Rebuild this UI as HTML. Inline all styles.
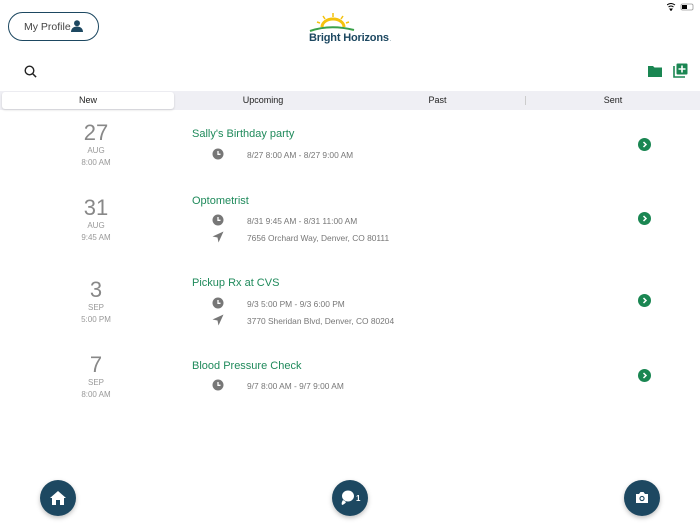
<!DOCTYPE html>
<html><head><meta charset="utf-8"><style>
*{margin:0;padding:0;box-sizing:border-box}
body{width:700px;height:525px;background:#fff;font-family:"Liberation Sans",sans-serif;position:relative;overflow:hidden;color:#777}
.a{position:absolute}
.prof{left:8px;top:12px;width:91px;height:29px;border:1px solid #1d4861;border-radius:15px;font-size:10.5px;color:#444;padding:8px 0 0 15px}
.tabs{left:0;top:91px;width:700px;height:19px;background:#efeff4}
.tab{position:absolute;top:0;height:19px;font-size:9px;color:#222;text-align:center;line-height:19px}
.day{width:70px;left:61px;text-align:center;color:#999}
.num{font-size:22px;color:#888;line-height:25px}
.sm{font-size:8px;line-height:12px}
.title{left:192px;font-size:11px;color:#1f8a5b}
.det{left:247px;font-size:8.4px;color:#777}
.ic{left:212px;width:12px;height:12px}
.chev{left:638px;width:13px;height:13px;border-radius:50%;background:#1a8652}
.fab{width:36px;height:36px;border-radius:50%;background:#1d4861;box-shadow:0 2px 5px rgba(0,0,0,.25)}
</style></head><body>
<div class="a prof">My Profile<svg style="position:absolute;left:62px;top:7px" width="12" height="12" viewBox="0 0 13 13"><circle cx="6.5" cy="3.5" r="3.2" fill="#1d4861"/><path d="M0 13c0-4 3-6 6.5-6s6.5 2 6.5 6z" fill="#1d4861"/></svg></div>
<svg class="a" style="left:308px;top:10px" width="90" height="34" viewBox="0 0 90 34">
<path d="M14 17a11 8 0 0 1 22 0" stroke="#f4c20d" stroke-width="3" fill="none"/>
<path d="M25 3v4M15 6l2 3M35 6l-2 3M9 12l3 1M41 12l-3 1" stroke="#f4c20d" stroke-width="1.5"/>
<path d="M2 21q20-7 44-1" stroke="#3aa14a" stroke-width="2" fill="none"/>
<text x="1" y="31" font-family="Liberation Sans" font-weight="bold" font-size="11" fill="#1d4861" textLength="80">Bright Horizons</text><text x="82" y="31" font-size="5" fill="#1d4861">.</text></svg>
<svg class="a" style="left:667px;top:3px" width="30" height="8" viewBox="0 0 30 8"><path d="M0 2q4-3 8 0M1.5 4q2.5-2 5 0M3 6l1 1.5 1-1.5z" stroke="#000" fill="none" stroke-width="1"/><rect x="14" y="1" width="12" height="6" rx="1.5" fill="none" stroke="#999" stroke-width=".8"/><rect x="15" y="2" width="5" height="4" fill="#000"/></svg>
<svg class="a" style="left:24px;top:65px" width="13" height="13" viewBox="0 0 13 13"><circle cx="5.5" cy="5.5" r="4.3" stroke="#222" stroke-width="1.4" fill="none"/><path d="M8.6 8.6l3.5 3.5" stroke="#222" stroke-width="1.5"/></svg>
<svg class="a" style="left:648px;top:65px" width="14" height="12" viewBox="0 0 14 12"><path d="M0 1h5l1.5 1.5H14V12H0z" fill="#1a8652"/></svg>
<svg class="a" style="left:673px;top:63px" width="15" height="15" viewBox="0 0 15 15"><path d="M1 3v11h11" stroke="#1a8652" stroke-width="1.6" fill="none"/><rect x="3.5" y="0.5" width="11" height="11" rx="1" fill="#1a8652"/><path d="M9 2.5v7M5.5 6h7" stroke="#fff" stroke-width="1.6"/></svg>
<div class="a tabs">
<div class="tab" style="left:2px;width:172px;top:1px;height:17px;line-height:17px;background:#fff;border-radius:3px;box-shadow:0 1px 2px rgba(0,0,0,.15)">New</div>
<div class="tab" style="left:176px;width:174px">Upcoming</div>
<div class="tab" style="left:350px;width:175px">Past</div>
<div style="position:absolute;left:525px;top:5px;width:1px;height:9px;background:#ccc"></div>
<div class="tab" style="left:526px;width:174px">Sent</div>
</div>

<div class="a day" style="top:120px"><div class="num">27</div><div class="sm">AUG</div><div class="sm">8:00 AM</div></div>
<div class="a title" style="top:128px">Sally's Birthday party</div>
<svg class="a ic" style="top:148px" viewBox="0 0 12 12"><circle cx="6" cy="6" r="5.5" fill="#777"/><path d="M6 3v3.3h2.5" stroke="#fff" stroke-width="1.3" fill="none"/></svg>
<div class="a det" style="top:150px">8/27 8:00 AM - 8/27 9:00 AM</div>
<div class="a chev" style="top:138px"><svg width="13" height="13" viewBox="0 0 13 13"><path d="M5.5 4l2.5 2.5L5.5 9" stroke="#fff" stroke-width="1.5" fill="none"/></svg></div>

<div class="a day" style="top:195px"><div class="num">31</div><div class="sm">AUG</div><div class="sm">9:45 AM</div></div>
<div class="a title" style="top:195px">Optometrist</div>
<svg class="a ic" style="top:214px" viewBox="0 0 12 12"><circle cx="6" cy="6" r="5.5" fill="#777"/><path d="M6 3v3.3h2.5" stroke="#fff" stroke-width="1.3" fill="none"/></svg>
<div class="a det" style="top:216px">8/31 9:45 AM - 8/31 11:00 AM</div>
<svg class="a ic" style="top:231px" viewBox="0 0 12 12"><path d="M11.5 0.5L0.5 5.5l5 1 1 5z" fill="#777"/></svg>
<div class="a det" style="top:233px">7656 Orchard Way, Denver, CO 80111</div>
<div class="a chev" style="top:212px"><svg width="13" height="13" viewBox="0 0 13 13"><path d="M5.5 4l2.5 2.5L5.5 9" stroke="#fff" stroke-width="1.5" fill="none"/></svg></div>

<div class="a day" style="top:277px"><div class="num">3</div><div class="sm">SEP</div><div class="sm">5:00 PM</div></div>
<div class="a title" style="top:277px">Pickup Rx at CVS</div>
<svg class="a ic" style="top:297px" viewBox="0 0 12 12"><circle cx="6" cy="6" r="5.5" fill="#777"/><path d="M6 3v3.3h2.5" stroke="#fff" stroke-width="1.3" fill="none"/></svg>
<div class="a det" style="top:299px">9/3 5:00 PM - 9/3 6:00 PM</div>
<svg class="a ic" style="top:314px" viewBox="0 0 12 12"><path d="M11.5 0.5L0.5 5.5l5 1 1 5z" fill="#777"/></svg>
<div class="a det" style="top:316px">3770 Sheridan Blvd, Denver, CO 80204</div>
<div class="a chev" style="top:294px"><svg width="13" height="13" viewBox="0 0 13 13"><path d="M5.5 4l2.5 2.5L5.5 9" stroke="#fff" stroke-width="1.5" fill="none"/></svg></div>

<div class="a day" style="top:352px"><div class="num">7</div><div class="sm">SEP</div><div class="sm">8:00 AM</div></div>
<div class="a title" style="top:360px">Blood Pressure Check</div>
<svg class="a ic" style="top:379px" viewBox="0 0 12 12"><circle cx="6" cy="6" r="5.5" fill="#777"/><path d="M6 3v3.3h2.5" stroke="#fff" stroke-width="1.3" fill="none"/></svg>
<div class="a det" style="top:381px">9/7 8:00 AM - 9/7 9:00 AM</div>
<div class="a chev" style="top:369px"><svg width="13" height="13" viewBox="0 0 13 13"><path d="M5.5 4l2.5 2.5L5.5 9" stroke="#fff" stroke-width="1.5" fill="none"/></svg></div>

<div class="a fab" style="left:40px;top:480px"><svg width="36" height="36" viewBox="0 0 36 36"><path d="M10 18l8-7 8 7h-2v7h-4v-5h-4v5h-4v-7z" fill="#fff"/></svg></div>
<div class="a fab" style="left:332px;top:480px"><svg width="36" height="36" viewBox="0 0 36 36"><ellipse cx="16" cy="16" rx="6" ry="5.5" fill="#fff"/><path d="M11 20q-2 3-1 5 3-1 4-3" fill="#fff"/><text x="24" y="21" font-family="Liberation Sans" font-weight="bold" font-size="8" fill="#fff">1</text></svg></div>
<div class="a fab" style="left:624px;top:480px"><svg width="36" height="36" viewBox="0 0 36 36"><path d="M12 14h3l1.5-2h3l1.5 2h3v9H12z" fill="#fff"/><circle cx="18" cy="18.5" r="2.6" fill="#1d4861"/><circle cx="18" cy="18.5" r="1.5" fill="#fff"/></svg></div>
</body></html>
